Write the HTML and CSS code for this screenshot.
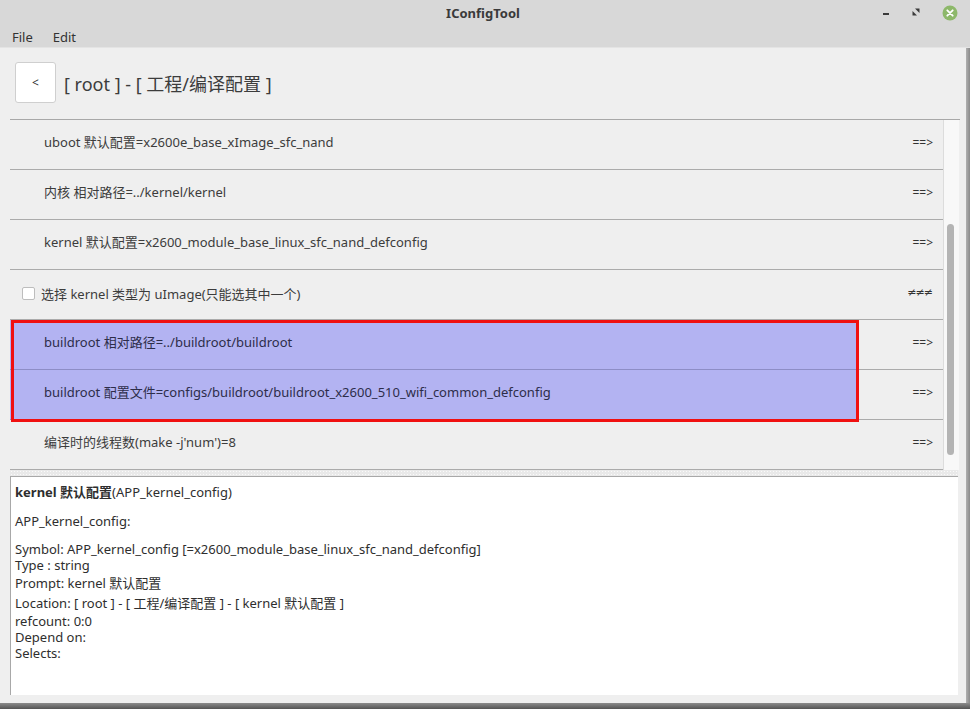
FILE: index.html
```html
<!DOCTYPE html>
<html lang="zh">
<head>
<meta charset="utf-8">
<title>IConfigTool</title>
<link rel="stylesheet" href="styles.css">
</head>
<body>
<div class="window">
  <div class="titlebar">
    <div class="title">IConfigTool</div>
    <div class="winbtns">
      <svg class="wb-min" width="8" height="4" viewBox="0 0 8 4"><rect x="1" y="1" width="6" height="2" fill="#3a3a3a"/></svg>
      <svg class="wb-max" width="8" height="8" viewBox="0 0 8 8"><path d="M3 0.5 H7.5 V5 Z" fill="#3a3a3a"/><path d="M0.5 3 V7.5 H5 Z" fill="#3a3a3a"/></svg>
      <svg class="wb-close" width="16" height="16" viewBox="0 0 16 16"><circle cx="8" cy="8" r="7.5" fill="#8db86a"/><path d="M5.3 5.3 L10.7 10.7 M10.7 5.3 L5.3 10.7" stroke="#fff" stroke-width="1.8" stroke-linecap="round"/></svg>
    </div>
  </div>
  <div class="menubar">
    <span class="menu">File</span>
    <span class="menu">Edit</span>
  </div>
  <div class="body">
    <div class="main">
      <div class="header">
        <button class="back">&lt;</button>
        <h1 class="crumb">[ root ] - [ 工程/编译配置 ]</h1>
      </div>
      <div class="listwrap">
        <div class="list">
          <div class="row"><div class="cell">uboot 默认配置=x2600e_base_xImage_sfc_nand</div><div class="arrow">==&gt;</div></div>
          <div class="row"><div class="cell">内核 相对路径=../kernel/kernel</div><div class="arrow">==&gt;</div></div>
          <div class="row"><div class="cell">kernel 默认配置=x2600_module_base_linux_sfc_nand_defconfig</div><div class="arrow">==&gt;</div></div>
          <div class="row"><div class="cell check"><span class="box"></span>选择 kernel 类型为 uImage(只能选其中一个)</div><div class="arrow neq">≠≠≠</div></div>
          <div class="row sel"><div class="cell">buildroot 相对路径=../buildroot/buildroot</div><div class="arrow">==&gt;</div></div>
          <div class="row sel"><div class="cell">buildroot 配置文件=configs/buildroot/buildroot_x2600_510_wifi_common_defconfig</div><div class="arrow">==&gt;</div></div>
          <div class="row"><div class="cell">编译时的线程数(make -j'num')=8</div><div class="arrow">==&gt;</div></div>
          <div class="annot"></div>
        </div>
        <div class="scroll"><div class="thumb"></div></div>
      </div>
      <div class="splitter"></div>
      <div class="details">
        <div class="d-title"><b>kernel 默认配置</b>(APP_kernel_config)</div>
        <div class="d-name">APP_kernel_config:</div>
        <div class="d-info">
          <div class="ln">Symbol: APP_kernel_config [=x2600_module_base_linux_sfc_nand_defconfig]</div>
          <div class="ln">Type : string</div>
          <div class="ln cjk">Prompt: kernel 默认配置</div>
          <div class="ln cjk">Location: [ root ] - [ 工程/编译配置 ] - [ kernel 默认配置 ]</div>
          <div class="ln">refcount: 0:0</div>
          <div class="ln">Depend on:</div>
          <div class="ln">Selects:</div>
        </div>
      </div>
    </div>
    <div class="rborder"></div>
  </div>
  <div class="shadow"></div>
</div>
</body>
</html>
```
FILE: styles.css
```css
* { box-sizing: border-box; }
html, body { margin: 0; padding: 0; }
body {
  width: 970px;
  height: 709px;
  overflow: hidden;
  font-family: "Noto Sans", "Noto Sans CJK SC", sans-serif;
  font-size: 13px;
  color: #3c3c3c;
  background: #efefef;
}
.window {
  width: 970px;
  height: 709px;
  display: flex;
  flex-direction: column;
}
.titlebar {
  height: 28px;
  background: #d8d8d8;
  position: relative;
  display: flex;
  align-items: center;
  justify-content: center;
  padding-bottom: 2px;
}
.title {
  font-weight: bold;
  font-size: 13px;
  color: #3a3a3a;
  margin-left: -4px;
}
.winbtns {
  position: absolute;
  right: 12px;
  top: 5px;
  display: flex;
  align-items: center;
  height: 16px;
}
.wb-min { margin-right: 22px; margin-top: 1px; }
.wb-max { margin-right: 22px; margin-top: -2px; }
.menubar {
  height: 20px;
  background: #d8d8d8;
  display: flex;
  align-items: center;
  gap: 20px;
  padding-left: 12px;
  padding-bottom: 2px;
  border-bottom: 1px solid #e4e4e4;
  color: #333;
  line-height: 18px;
}
.body {
  flex: 1;
  display: flex;
  min-height: 0;
}
.main {
  flex: 1;
  display: flex;
  flex-direction: column;
  background: #efefef;
  padding-bottom: 8px;
}
.rborder {
  width: 4px;
  background: linear-gradient(to right, #b0b0b0, #8a8a8a);
}
.header {
  height: 71px;
  display: flex;
  align-items: flex-start;
  padding: 14px 0 0 15px;
}
.back {
  width: 41px;
  height: 41px;
  background: #fff;
  border: 1px solid #cfcfcf;
  border-radius: 3px;
  font-family: "Noto Sans", sans-serif;
  font-size: 12px;
  color: #333;
  padding: 0;
  margin: 0 8px 0 0;
}
.crumb {
  margin: 0;
  padding-top: 2px;
  font-weight: normal;
  font-size: 18px;
  line-height: 41px;
  color: #3c3c3c;
}
.listwrap {
  margin-left: 10px;
  width: 950px;
  border-top: 1px solid #a8a8a8;
  display: flex;
}
.list {
  width: 934px;
  border-right: 1px solid #dcdcdc;
  position: relative;
}
.row {
  height: 50px;
  display: flex;
  border-bottom: 1px solid #ababab;
}
.cell {
  width: 848px;
  padding-left: 34px;
  line-height: 45px;
  white-space: nowrap;
}
.cell.check {
  padding-left: 12px;
  display: flex;
  align-items: center;
}
.box {
  width: 13px;
  height: 13px;
  background: #fff;
  border: 1px solid #bdbdbd;
  border-radius: 2px;
  margin-right: 6px;
  margin-top: -3px;
}
.arrow {
  flex: 1;
  text-align: right;
  padding-right: 10px;
  line-height: 45px;
  font-size: 12px;
  color: #333;
}
.arrow.neq {
  font-family: "DejaVu Sans", sans-serif;
  font-size: 11px;
  letter-spacing: -1px;
  padding-right: 11px;
}
.row.sel .cell {
  background: #b3b3f2;
  color: #2d2d4a;
  height: 50px;
  margin-bottom: -1px;
  border-bottom: 1px solid #8d8dc6;
}
.annot {
  position: absolute;
  left: 1px;
  top: 200px;
  width: 848px;
  height: 102px;
  border: 3px solid #f01010;
  pointer-events: none;
}
.scroll {
  width: 15px;
  background: #f8f8f8;
  position: relative;
}
.thumb {
  position: absolute;
  left: 3px;
  top: 104px;
  width: 7px;
  height: 231px;
  background: #b4b4b4;
  border-radius: 4px;
}
.splitter {
  height: 6px;
  margin-left: 10px;
  width: 948px;
  background-color: #e9e9e9;
  background-image: radial-gradient(circle, #fafafa 0.8px, transparent 1px);
  background-size: 3px 3px;
}
.details {
  flex: 1;
  margin-left: 10px;
  width: 948px;
  background: #fff;
  border-top: 1px solid #a8a8a8;
  border-left: 1px solid #a8a8a8;
  padding: 5px 0 0 4px;
  color: #2e2e2e;
}
.d-title { line-height: 20px; }
.d-title b { font-weight: bold; }
.d-name { line-height: 16px; margin-top: 11px; }
.d-info { margin-top: 12px; }
.ln { line-height: 16px; white-space: nowrap; }
.ln.cjk { line-height: 20px; }
.shadow {
  height: 6px;
  background: linear-gradient(#8c8c8c, #545454);
}
```
